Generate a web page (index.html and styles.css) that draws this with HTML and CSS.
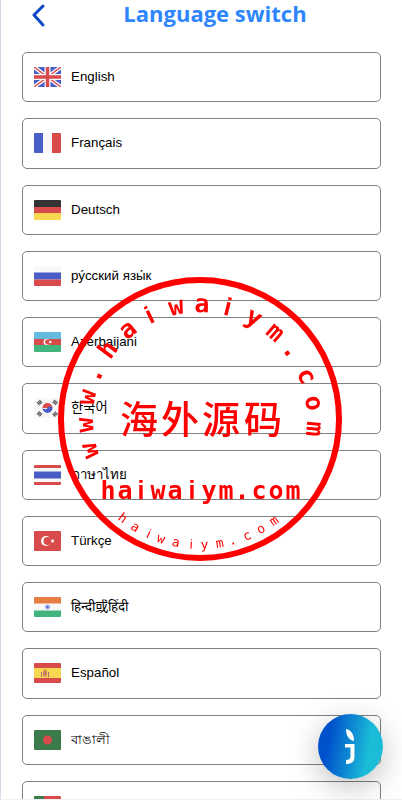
FILE: index.html
```html
<!DOCTYPE html>
<html lang="en">
<head>
    <meta charset="UTF-8">
    <meta name="viewport" content="width=device-width, initial-scale=1.0">
    <title>Language switch</title>
    <link rel="stylesheet" href="styles.css">
</head>
<body>
    <div class="page">
        <header class="header">
            <button class="back" aria-label="Back">
                <svg width="14" height="24" viewBox="0 0 14 24"><path d="M12 3 3 12l9 10" fill="none" stroke="#0d47c8" stroke-width="3" stroke-linecap="round" stroke-linejoin="round"/></svg>
            </button>
            <h1>Language switch</h1>
        </header>

        <!-- Language list -->
        <ul class="languages">
            <li><button class="language">
                <svg class="flag" viewBox="0 0 27 20">
                    <path fill="#495dc7" d="M0 0h27v20H0z"/>
                    <path stroke="#f8f8f8" stroke-width="4" d="m0 0 27 20M27 0 0 20"/>
                    <path stroke="#d94b4b" stroke-width="1.4" d="m0 0 27 20M27 0 0 20"/>
                    <path stroke="#f8f8f8" stroke-width="6" d="M13.5 0v20M0 10h27"/>
                    <path stroke="#d94b4b" stroke-width="3.4" d="M13.5 0v20M0 10h27"/>
                </svg>
                <span>English</span>
            </button></li>
            <li><button class="language">
                <svg class="flag" viewBox="0 0 27 20">
                    <path fill="#f8f8f8" d="M0 0h27v20H0z"/>
                    <path fill="#495dc7" d="M0 0h9v20H0z"/>
                    <path fill="#d94b4b" d="M18 0h9v20h-9z"/>
                </svg>
                <span>Français</span>
            </button></li>
            <li><button class="language">
                <svg class="flag" viewBox="0 0 27 20">
                    <path fill="#333" d="M0 0h27v7H0z"/>
                    <path fill="#d94b4b" d="M0 7h27v6H0z"/>
                    <path fill="#f8d850" d="M0 13h27v7H0z"/>
                </svg>
                <span>Deutsch</span>
            </button></li>
            <li><button class="language">
                <svg class="flag" viewBox="0 0 27 20">
                    <path fill="#f8f8f8" d="M0 0h27v7H0z"/>
                    <path fill="#495dc7" d="M0 6.5h27v7H0z"/>
                    <path fill="#d94b4b" d="M0 13.5h27V20H0z"/>
                </svg>
                <span>ру́сский язы́к</span>
            </button></li>
            <li><button class="language">
                <svg class="flag" viewBox="0 0 27 20">
                    <path fill="#65bbdd" d="M0 0h27v7H0z"/>
                    <path fill="#d94b4b" d="M0 7h27v6H0z"/>
                    <path fill="#42b47e" d="M0 13h27v7H0z"/>
                    <circle cx="12.5" cy="10" r="3" fill="#fff"/>
                    <circle cx="13.5" cy="10" r="2.4" fill="#d94b4b"/>
                    <circle cx="16.3" cy="10" r="1.2" fill="#fff"/>
                </svg>
                <span>Azerbaijani</span>
            </button></li>
            <li><button class="language">
                <svg class="flag" viewBox="0 0 27 20">
                    <path fill="#f8f8f8" d="M0 0h27v20H0z"/>
                    <path fill="#d94b4b" d="M8.5 10a5 5 0 0 1 10 0z"/>
                    <path fill="#495dc7" d="M8.5 10a5 5 0 0 0 10 0c-1-2-4-2-5 0s-4 1-5 0z"/>
                    <g stroke="#444" stroke-width="4" stroke-dasharray="1 .6">
                        <path d="m4 6 3.5-3M19.500 3 23 6M4 14.5l3.5 3M19.5 17.5l3.5-3"/>
                    </g>
                </svg>
                <span>한국어</span>
            </button></li>
            <li><button class="language">
                <svg class="flag" viewBox="0 0 27 20">
                    <path fill="#d94b4b" d="M0 0h27v20H0z"/>
                    <path fill="#f8f8f8" d="M0 3h27v14H0z"/>
                    <path fill="#495dc7" d="M0 6.5h27v7H0z"/>
                </svg>
                <span>ภาษาไทย</span>
            </button></li>
            <li><button class="language">
                <svg class="flag" viewBox="0 0 27 20">
                    <path fill="#d94b4b" d="M0 0h27v20H0z"/>
                    <circle cx="12" cy="10" r="5" fill="#fff"/>
                    <circle cx="13.5" cy="10" r="4" fill="#d94b4b"/>
                    <path fill="#fff" d="m16 10 1.700-.5.100-1.800 1.100 1.400 1.600-.5-1 1.400 1 1.400-1.600-.5-1.100 1.400-.1-1.800z"/>
                </svg>
                <span>Türkçe</span>
            </button></li>
            <li><button class="language">
                <svg class="flag" viewBox="0 0 27 20">
                    <path fill="#e67e43" d="M0 0h27v7H0z"/>
                    <path fill="#f8f8f8" d="M0 6.5h27v7H0z"/>
                    <path fill="#42b47e" d="M0 13.5h27V20H0z"/>
                    <circle cx="13.5" cy="10" r="2" fill="#b8c0e8" stroke="#8f9bdc"/>
                    <circle cx="13.5" cy="10" r="1" fill="#495dc7"/>
                </svg>
                <span>हिन्दी或हिंदी</span>
            </button></li>
            <li><button class="language">
                <svg class="flag" viewBox="0 0 27 20">
                    <path fill="#d94b4b" d="M0 0h27v20H0z"/>
                    <path fill="#f8d850" d="M0 5h27v10H0z"/>
                    <path fill="#d98a5a" d="M9 8h4v5l-2 1-2-1zM9.5 6.5h3V8h-3z"/>
                    <path stroke="#a86a78" d="M7.5 9v5M14.5 9v5M9 10.5h4"/>
                </svg>
                <span>Español</span>
            </button></li>
            <li><button class="language">
                <svg class="flag" viewBox="0 0 27 20">
                    <path fill="#3a7a4b" d="M0 0h27v20H0z"/>
                    <circle cx="13.5" cy="10" r="4.5" fill="#d94b4b"/>
                </svg>
                <span>বাঙালী</span>
            </button></li>
            <li><button class="language">
                <svg class="flag" viewBox="0 0 27 20">
                    <path fill="#d94b4b" d="M0 0h27v20H0z"/>
                    <path fill="#3a7a4b" d="M0 0h10v20H0z"/>
                    <circle cx="10" cy="10" r="4" fill="#f8d850"/>
                </svg>
                <span>Português</span>
            </button></li>
        </ul>
    </div>

    <!-- Round stamp over the list -->
    <svg class="stamp" viewBox="-143 -143 286 286">
        <circle r="139" fill="none" stroke="#f00" stroke-width="6"/>
        <!-- top arc, one letter every 13 degrees or so -->
        <g class="stamp-latin">
            <text y="-107" transform="rotate(-106)">w</text>
            <text y="-107" transform="rotate(-93)">w</text>
            <text y="-107" transform="rotate(-79)">w</text>
            <text y="-107" transform="rotate(-67)">.</text>
            <text y="-107" transform="rotate(-53)">h</text>
            <text y="-107" transform="rotate(-39)">a</text>
            <text y="-107" transform="rotate(-26)" class="plain">i</text>
            <text y="-107" transform="rotate(-12)">w</text>
            <text y="-107" transform="rotate(1)">a</text>
            <text y="-107" transform="rotate(14)" class="plain">i</text>
            <text y="-107" transform="rotate(28)">y</text>
            <text y="-107" transform="rotate(41)">m</text>
            <text y="-107" transform="rotate(53)">.</text>
            <text y="-107" transform="rotate(68)">c</text>
            <text y="-107" transform="rotate(82)">o</text>
            <text y="-107" transform="rotate(95)">m</text>
        </g>
        <text class="stamp-han" x="-61 -20 21 63" y="14">海外源码</text>
        <text class="stamp-latin" x="-92 -75 -59 -42 -25 -8 9 26 42 59 76 93" y="80">ha<tspan class="plain">i</tspan>wa<tspan class="plain">i</tspan>ym.com</text>
        <!-- bottom arc -->
        <g class="stamp-small">
            <text y="130" transform="rotate(38)">h</text>
            <text y="130" transform="rotate(31)">a</text>
            <text y="130" transform="rotate(24)" class="plain">i</text>
            <text y="130" transform="rotate(18)">w</text>
            <text y="130" transform="rotate(11)">a</text>
            <text y="130" transform="rotate(4)" class="plain">i</text>
            <text y="130" transform="rotate(-2)">y</text>
            <text y="130" transform="rotate(-9)">m</text>
            <text y="130" transform="rotate(-15)">.</text>
            <text y="130" transform="rotate(-22)">c</text>
            <text y="130" transform="rotate(-29)">o</text>
            <text y="130" transform="rotate(-36)">m</text>
        </g>
    </svg>

    <!-- Floating service button -->
    <button class="service" aria-label="Customer service">
        <svg width="65" height="65" viewBox="0 0 65 65">
            <path fill="#fff" d="M28 15c5 1 8 5 8 12-5-1-8-5-8-12z"/>
            <path fill="#fff" d="M27 30h9.500v13c0 4.500-3 7-8.500 7v-4c3 0 4.500-1 4.500-4v-8.500H27z"/>
        </svg>
    </button>
</body>
</html>
```
FILE: styles.css
```css
/* Global styles */
* {
    box-sizing: border-box;
}

body {
    font-family: "Liberation Sans", "Noto Sans CJK SC", Arial, sans-serif;
    background-color: #fff;
    color: #000;
    margin: 0;
}

button {
    border: none;
    background: none;
    padding: 0;
    font-family: inherit;
    color: inherit;
    cursor: pointer;
}

.page {
    height: 100vh;
    overflow-y: auto;
    scrollbar-width: none;
    padding: 0 21px;
    border-left: 1px solid #d8dae8;
    border-bottom: 1px solid #f0f0f0;
}

/* Header styles */
.header {
    display: flex;
    align-items: center;
    height: 30px;
    margin-bottom: 22px;
}

.back {
    width: 32px;
    padding-left: 9px;
    text-align: left;
}

.back svg {
    display: block;
}

.header h1 {
    flex: 1;
    margin: 0;
    padding: 0 5px 4px 0;
    font-family: "Open Sans", "Noto Sans", sans-serif;
    font-size: 22px;
    line-height: 26px;
    text-align: center;
    color: #2e86ff;
}

/* Language list */
.languages {
    display: grid;
    grid-auto-rows: 1fr;
    gap: 16px;
    min-height: 779px;
    margin: 0;
    padding: 0;
    list-style: none;
}

.language {
    display: flex;
    align-items: center;
    gap: 10px;
    width: 100%;
    height: 100%;
    padding: 0 11px;
    border: 1px solid #808080;
    border-radius: 5px;
}

.language span {
    line-height: 18px;
}

.flag {
    width: 27px;
    height: 20px;
    border-radius: 1px;
}

/* Stamp */
.stamp {
    position: fixed;
    top: 276px;
    left: 0;
    right: 2px;
    margin: 0 auto;
    width: 286px;
    height: 286px;
    pointer-events: none;
}

.stamp text {
    fill: #f00;
    text-anchor: middle;
}

.stamp-latin {
    font: bold 25px "DejaVu Sans Mono", monospace;
}

.stamp-small {
    font: 13px "DejaVu Sans Mono", monospace;
}

.stamp .plain {
    font-family: "Liberation Sans", sans-serif;
}

.stamp-han {
    font: 500 38px KaiTi, "Noto Sans CJK SC", serif;
}

/* Service button */
.service {
    position: fixed;
    right: 19px;
    bottom: 21px;
    width: 65px;
    height: 65px;
    border-radius: 50%;
    background: linear-gradient(100deg, #0052cc 20%, #1bbcd8 75%);
    box-shadow: 0 8px 30px rgba(0, 0, 0, 0.25);
}

.service svg {
    display: block;
}
```
